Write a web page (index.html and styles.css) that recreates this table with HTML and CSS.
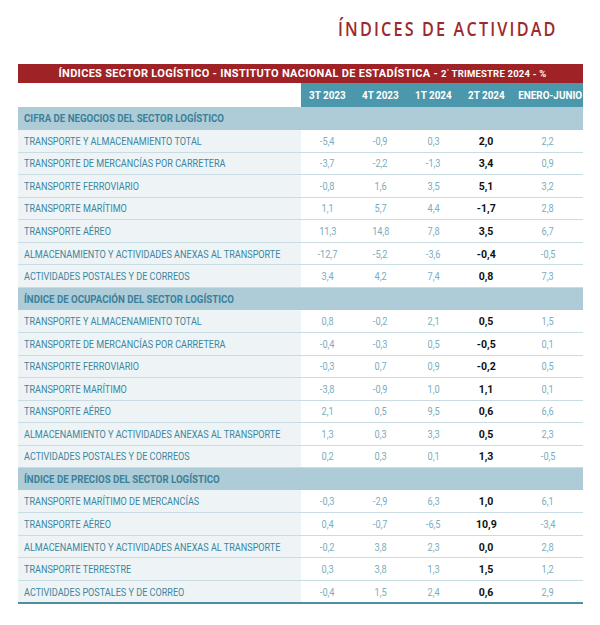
FILE: index.html
```html
<!DOCTYPE html>
<html lang="es">
<head>
<meta charset="utf-8">
<link rel="stylesheet" href="styles.css">
</head>
<body>
<div class="page">
  <h1 class="title"><span class="title-text">ÍNDICES DE ACTIVIDAD</span></h1>
  <table class="tbl">
    <colgroup>
      <col class="c-label"><col class="c-q"><col class="c-q"><col class="c-q"><col class="c-q"><col class="c-ej">
    </colgroup>
    <thead>
      <tr class="banner"><th colspan="6"><div class="banner-wrap"><span class="banner-text">ÍNDICES SECTOR LOGÍSTICO - INSTITUTO NACIONAL DE ESTADÍSTICA - <span class="small">2<sup>°</sup> TRIMESTRE 2024 - %</span></span></div></th></tr>
      <tr class="heads"><th class="blank"></th><th><span class="h">3T 2023</span></th><th><span class="h">4T 2023</span></th><th><span class="h">1T 2024</span></th><th><span class="h">2T 2024</span></th><th><span class="h">ENERO-JUNIO</span></th></tr>
    </thead>
    <tbody>
      <tr class="sec"><td colspan="6"><span class="s">CIFRA DE NEGOCIOS DEL SECTOR LOGÍSTICO</span></td></tr>
      <tr><td class="lbl"><span class="l">TRANSPORTE Y ALMACENAMIENTO TOTAL</span></td><td><span class="n">-5,4</span></td><td><span class="n">-0,9</span></td><td><span class="n">0,3</span></td><td class="b"><span class="n">2,0</span></td><td><span class="n">2,2</span></td></tr>
      <tr><td class="lbl"><span class="l">TRANSPORTE DE MERCANCÍAS POR CARRETERA</span></td><td><span class="n">-3,7</span></td><td><span class="n">-2,2</span></td><td><span class="n">-1,3</span></td><td class="b"><span class="n">3,4</span></td><td><span class="n">0,9</span></td></tr>
      <tr><td class="lbl"><span class="l">TRANSPORTE FERROVIARIO</span></td><td><span class="n">-0,8</span></td><td><span class="n">1,6</span></td><td><span class="n">3,5</span></td><td class="b"><span class="n">5,1</span></td><td><span class="n">3,2</span></td></tr>
      <tr><td class="lbl"><span class="l">TRANSPORTE MARÍTIMO</span></td><td><span class="n">1,1</span></td><td><span class="n">5,7</span></td><td><span class="n">4,4</span></td><td class="b"><span class="n">-1,7</span></td><td><span class="n">2,8</span></td></tr>
      <tr><td class="lbl"><span class="l">TRANSPORTE AÉREO</span></td><td><span class="n">11,3</span></td><td><span class="n">14,8</span></td><td><span class="n">7,8</span></td><td class="b"><span class="n">3,5</span></td><td><span class="n">6,7</span></td></tr>
      <tr><td class="lbl"><span class="l">ALMACENAMIENTO Y ACTIVIDADES ANEXAS AL TRANSPORTE</span></td><td><span class="n">-12,7</span></td><td><span class="n">-5,2</span></td><td><span class="n">-3,6</span></td><td class="b"><span class="n">-0,4</span></td><td><span class="n">-0,5</span></td></tr>
      <tr><td class="lbl"><span class="l">ACTIVIDADES POSTALES Y DE CORREOS</span></td><td><span class="n">3,4</span></td><td><span class="n">4,2</span></td><td><span class="n">7,4</span></td><td class="b"><span class="n">0,8</span></td><td><span class="n">7,3</span></td></tr>
      <tr class="sec"><td colspan="6"><span class="s">ÍNDICE DE OCUPACIÓN DEL SECTOR LOGÍSTICO</span></td></tr>
      <tr><td class="lbl"><span class="l">TRANSPORTE Y ALMACENAMIENTO TOTAL</span></td><td><span class="n">0,8</span></td><td><span class="n">-0,2</span></td><td><span class="n">2,1</span></td><td class="b"><span class="n">0,5</span></td><td><span class="n">1,5</span></td></tr>
      <tr><td class="lbl"><span class="l">TRANSPORTE DE MERCANCÍAS POR CARRETERA</span></td><td><span class="n">-0,4</span></td><td><span class="n">-0,3</span></td><td><span class="n">0,5</span></td><td class="b"><span class="n">-0,5</span></td><td><span class="n">0,1</span></td></tr>
      <tr><td class="lbl"><span class="l">TRANSPORTE FERROVIARIO</span></td><td><span class="n">-0,3</span></td><td><span class="n">0,7</span></td><td><span class="n">0,9</span></td><td class="b"><span class="n">-0,2</span></td><td><span class="n">0,5</span></td></tr>
      <tr><td class="lbl"><span class="l">TRANSPORTE MARÍTIMO</span></td><td><span class="n">-3,8</span></td><td><span class="n">-0,9</span></td><td><span class="n">1,0</span></td><td class="b"><span class="n">1,1</span></td><td><span class="n">0,1</span></td></tr>
      <tr><td class="lbl"><span class="l">TRANSPORTE AÉREO</span></td><td><span class="n">2,1</span></td><td><span class="n">0,5</span></td><td><span class="n">9,5</span></td><td class="b"><span class="n">0,6</span></td><td><span class="n">6,6</span></td></tr>
      <tr><td class="lbl"><span class="l">ALMACENAMIENTO Y ACTIVIDADES ANEXAS AL TRANSPORTE</span></td><td><span class="n">1,3</span></td><td><span class="n">0,3</span></td><td><span class="n">3,3</span></td><td class="b"><span class="n">0,5</span></td><td><span class="n">2,3</span></td></tr>
      <tr><td class="lbl"><span class="l">ACTIVIDADES POSTALES Y DE CORREOS</span></td><td><span class="n">0,2</span></td><td><span class="n">0,3</span></td><td><span class="n">0,1</span></td><td class="b"><span class="n">1,3</span></td><td><span class="n">-0,5</span></td></tr>
      <tr class="sec"><td colspan="6"><span class="s">ÍNDICE DE PRECIOS DEL SECTOR LOGÍSTICO</span></td></tr>
      <tr><td class="lbl"><span class="l">TRANSPORTE MARÍTIMO DE MERCANCÍAS</span></td><td><span class="n">-0,3</span></td><td><span class="n">-2,9</span></td><td><span class="n">6,3</span></td><td class="b"><span class="n">1,0</span></td><td><span class="n">6,1</span></td></tr>
      <tr><td class="lbl"><span class="l">TRANSPORTE AÉREO</span></td><td><span class="n">0,4</span></td><td><span class="n">-0,7</span></td><td><span class="n">-6,5</span></td><td class="b"><span class="n">10,9</span></td><td><span class="n">-3,4</span></td></tr>
      <tr><td class="lbl"><span class="l">ALMACENAMIENTO Y ACTIVIDADES ANEXAS AL TRANSPORTE</span></td><td><span class="n">-0,2</span></td><td><span class="n">3,8</span></td><td><span class="n">2,3</span></td><td class="b"><span class="n">0,0</span></td><td><span class="n">2,8</span></td></tr>
      <tr><td class="lbl"><span class="l">TRANSPORTE TERRESTRE</span></td><td><span class="n">0,3</span></td><td><span class="n">3,8</span></td><td><span class="n">1,3</span></td><td class="b"><span class="n">1,5</span></td><td><span class="n">1,2</span></td></tr>
      <tr class="last"><td class="lbl"><span class="l">ACTIVIDADES POSTALES Y DE CORREO</span></td><td><span class="n">-0,4</span></td><td><span class="n">1,5</span></td><td><span class="n">2,4</span></td><td class="b"><span class="n">0,6</span></td><td><span class="n">2,9</span></td></tr>
    </tbody>
  </table>
</div>
</body>
</html>
```
FILE: styles.css
```css
html, body {
  margin: 0;
  padding: 0;
  background: #ffffff;
}
.page {
  width: 565px;
  padding: 0 0 0 18px;
  font-family: "Roboto", "Open Sans", sans-serif;
}
.title {
  margin: 0;
  height: 64px;
  box-sizing: border-box;
  padding: 17px 25px 0 0;
  text-align: right;
  font-family: "Open Sans", "Noto Sans", sans-serif;
  font-weight: 600;
  font-size: 19.5px;
  letter-spacing: 2.6px;
  color: #9c2a2d;
  line-height: 24px;
  white-space: nowrap;
}
.title-text {
  display: inline-block;
  transform: scaleX(0.83);
  transform-origin: right center;
}
.tbl {
  width: 565px;
  border-collapse: collapse;
  table-layout: fixed;
}
.c-label { width: 283px; }
.c-q { width: 53px; }
.c-ej { width: 70px; }
.banner th {
  background: #9e2226;
  color: #ffffff;
  height: 19px;
  padding: 0;
  font-weight: 700;
}
.banner-wrap {
  display: flex;
  justify-content: center;
  height: 19px;
  align-items: center;
  white-space: nowrap;
}
.banner-text {
  display: inline-block;
  font-size: 11px;
  letter-spacing: 0.3px;
  line-height: 19px;
  padding-left: 4px;
}
.banner .small {
  font-size: 9.5px;
  letter-spacing: 0.2px;
}
.banner sup {
  font-size: 6px;
  vertical-align: 4px;
  line-height: 0;
}
.heads th {
  background: #4b97ab;
  color: #ffffff;
  height: 24px;
  padding: 0;
  font-size: 11.5px;
  font-weight: 700;
  text-align: center;
  white-space: nowrap;
}
.heads th.blank {
  background: #ffffff;
}
.h {
  display: inline-block;
  transform: scaleX(0.86);
  transform-origin: center center;
}
.tbl td {
  height: 22.55px;
  padding: 0;
  box-sizing: border-box;
  border-bottom: 1px solid #c9dce4;
  text-align: center;
  font-size: 11.5px;
  font-weight: 400;
  color: #7aadbe;
  white-space: nowrap;
}
.n {
  display: inline-block;
  transform: scaleX(0.8);
  transform-origin: center center;
}
.tbl td.lbl {
  background: #eef3f6;
  text-align: left;
  padding-left: 6px;
  color: #3a87a0;
  font-size: 11.5px;
  font-weight: 400;
}
.l {
  display: inline-block;
  transform: scaleX(0.79);
  transform-origin: left center;
}
.tbl td.b {
  color: #111111;
  font-weight: 700;
}
.tbl td.b .n {
  transform: scaleX(0.92);
}
.tbl tr.sec td {
  background: #aecbd8;
  text-align: left;
  padding-left: 6px;
  color: #3a8198;
  font-weight: 700;
  font-size: 11.5px;
  border-bottom: none;
}
.s {
  display: inline-block;
  transform: scaleX(0.84);
  transform-origin: left center;
}
.tbl tr.last td {
  border-bottom: 2px solid #4a8fa3;
}
```
